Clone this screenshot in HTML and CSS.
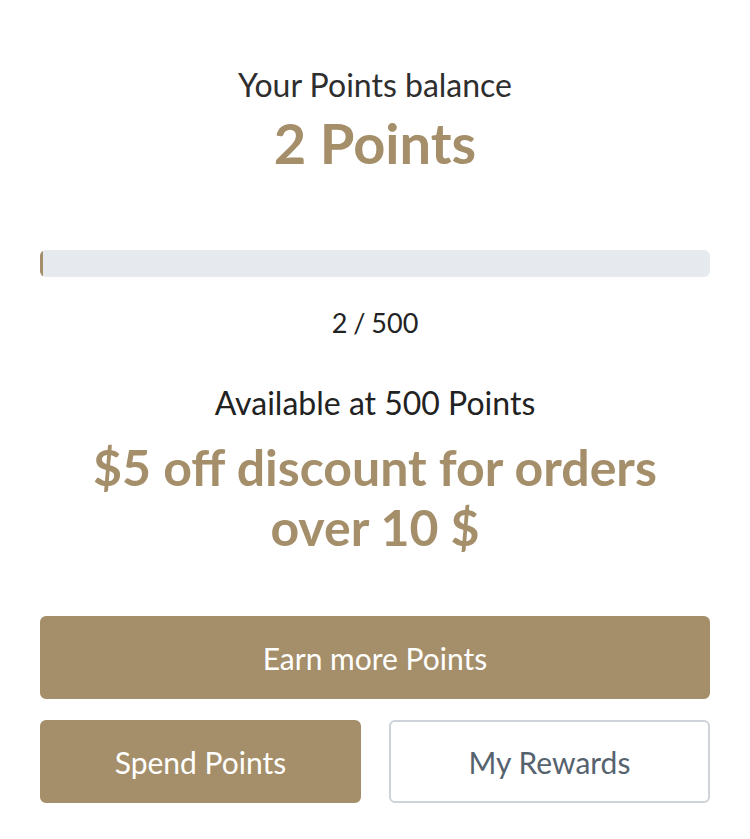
FILE: index.html
```html
<!DOCTYPE html>
<html>
<head>
<meta charset="utf-8">
<link rel="stylesheet" href="styles.css">
</head>
<body>
<div class="wrap">
  <div class="balance-label">Your Points balance</div>
  <div class="balance">2 Points</div>
  <div class="bar"><div class="fill" style="width:0.4%"></div></div>
  <div class="count">2 / 500</div>
  <div class="avail">Available at 500 Points</div>
  <div class="reward">$5 off discount for orders over 10 $</div>
  <button class="btn primary full">Earn more Points</button>
  <div class="row">
    <button class="btn primary">Spend Points</button>
    <button class="btn outline">My Rewards</button>
  </div>
</div>
</body>
</html>
```
FILE: styles.css
```css
html, body { margin: 0; padding: 0; background: #fff; }
body { font-family: Lato, "Open Sans", sans-serif; color: #222; }
.wrap { padding: 65px 40px 0; display: flex; flex-direction: column; align-items: stretch; text-align: center; }
.balance-label { font-size: 32px; line-height: 40px; color: #2e2e2e; }
.balance { font-size: 56px; font-weight: 700; color: #a58f6b; line-height: 64px; margin-top: 6px; }
.bar { margin-top: 75px; height: 27px; background: #e6eaee; border-radius: 6px; overflow: hidden; }
.fill { height: 100%; background: #a58f6b; }
.count { margin-top: 28px; font-size: 27px; line-height: 36px; color: #222; word-spacing: -1px; }
.avail { margin-top: 42px; font-size: 32px; line-height: 40px; color: #222; }
.reward { margin-top: 14px; padding: 0 30px; font-size: 50px; font-weight: 700; line-height: 60px; color: #a58f6b; }
.btn { font-family: Lato, sans-serif; font-size: 30px; height: 83px; border-radius: 6px; border: 2px solid transparent; cursor: pointer; padding: 0; }
.primary { background: #a58f6b; color: #fff; border-color: #a58f6b; }
.outline { background: #fff; color: #56636e; border-color: #cdd3d8; }
.full { margin-top: 59px; width: 100%; }
.row { margin-top: 21px; display: grid; grid-template-columns: 1fr 1fr; gap: 28px; }
```
